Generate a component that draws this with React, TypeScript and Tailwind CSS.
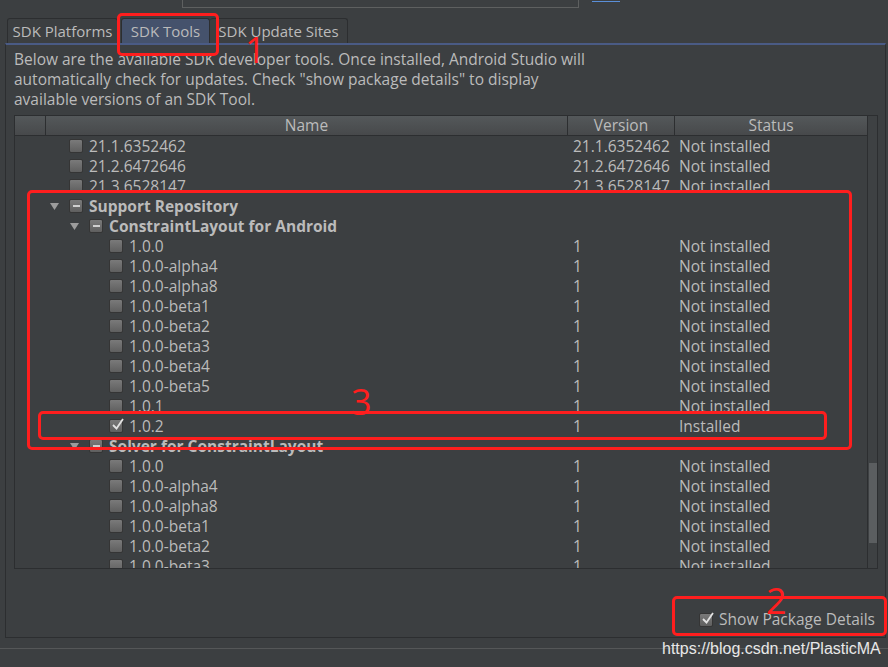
import { Fragment } from 'react'

type Row = {
  label: string
  version: string
  status: string
  level: 0 | 1 | 2
  expander?: boolean
  box: 'empty' | 'checked' | 'partial'
  bold?: boolean
}

const leaf = (label: string, level: 0 | 1 | 2, version: string, status = 'Not installed'): Row => ({
  label,
  version,
  status,
  level,
  box: 'empty',
})

const rows: Row[] = [
  leaf('21.1.6352462', 0, '21.1.6352462'),
  leaf('21.2.6472646', 0, '21.2.6472646'),
  leaf('21.3.6528147', 0, '21.3.6528147'),
  { label: 'Support Repository', version: '', status: '', level: 0, expander: true, box: 'partial', bold: true },
  { label: 'ConstraintLayout for Android', version: '', status: '', level: 1, expander: true, box: 'partial', bold: true },
  leaf('1.0.0', 2, '1'),
  leaf('1.0.0-alpha4', 2, '1'),
  leaf('1.0.0-alpha8', 2, '1'),
  leaf('1.0.0-beta1', 2, '1'),
  leaf('1.0.0-beta2', 2, '1'),
  leaf('1.0.0-beta3', 2, '1'),
  leaf('1.0.0-beta4', 2, '1'),
  leaf('1.0.0-beta5', 2, '1'),
  leaf('1.0.1', 2, '1'),
  { label: '1.0.2', version: '1', status: 'Installed', level: 2, box: 'checked' },
  { label: 'Solver for ConstraintLayout', version: '', status: '', level: 1, expander: true, box: 'partial', bold: true },
  leaf('1.0.0', 2, '1'),
  leaf('1.0.0-alpha4', 2, '1'),
  leaf('1.0.0-alpha8', 2, '1'),
  leaf('1.0.0-beta1', 2, '1'),
  leaf('1.0.0-beta2', 2, '1'),
  leaf('1.0.0-beta3', 2, '1'),
]

const indent = {
  0: 'pl-[33px]',
  1: 'pl-[53px]',
  2: 'pl-[73px]',
}

function Box({ state }: { state: 'empty' | 'checked' | 'partial' }) {
  return (
    <span className="relative flex h-[14px] w-[14px] shrink-0 items-center justify-center rounded-[2px] border border-[#353535] bg-gradient-to-b from-[#7a7a7a] to-[#5f5f5f]">
      {state === 'partial' && <span className="h-[2px] w-[7px] bg-[#cfcfcf]" />}
      {state === 'checked' && (
        <svg width="14" height="14" viewBox="0 0 14 14" className="absolute -top-[3px] left-[1px]">
          <path d="M2 8 L5.5 11.5 L12 2" fill="none" stroke="#e2e2e2" strokeWidth="1.8" />
        </svg>
      )}
    </span>
  )
}

function Triangle() {
  return (
    <svg width="9" height="7" viewBox="0 0 9 7" className="ml-[2px]">
      <polygon points="0,0 9,0 4.5,7" fill="#9c9c9c" />
    </svg>
  )
}

function RedBox({ className }: { className: string }) {
  return <div className={`absolute rounded-[5px] border-[3px] border-[#ff1e1e] ${className}`} />
}

export default function App() {
  return (
    <div className="relative h-[667px] w-[888px] overflow-hidden bg-[#3c3f41] font-['Open_Sans',sans-serif] text-[15.5px] text-[#bbbbbb]">
      {/* search field remnant at top */}
      <div className="flex h-[18px] items-start">
        <div className="ml-[182px] h-[8px] w-[397px] border-b border-l border-r border-[#5e6060]" />
        <div className="ml-[13px] mt-[1px] h-[1px] w-[28px] bg-[#5a8fd8]" />
      </div>

      {/* tabs */}
      <div className="flex h-[25px] items-end pl-[7px] text-[15px]">
        <div className="flex h-[25px] w-[111px] items-center justify-center rounded-t-[3px] border-l border-r border-t border-[#2c2e30]">
          SDK Platforms
        </div>
        <div className="ml-[3px] flex h-[25px] w-[89px] items-center justify-center rounded-t-[3px] border-l border-r border-t border-[#2c2e30] bg-[#45526c]">
          SDK Tools
        </div>
        <div className="flex h-[25px] w-[138px] items-center justify-center rounded-t-[3px] border-r border-t border-[#2c2e30]">
          SDK Update Sites
        </div>
      </div>

      {/* panel */}
      <div className="ml-[5px] flex h-[595px] w-[881px] flex-col border-b border-l border-r border-t-2 border-b-[#2c2e30] border-l-[#2c2e30] border-r-[#2c2e30] border-t-[#4a5b85]">
        <p className="pl-[8px] pt-[4px] leading-[20px]">
          Below are the available SDK developer tools. Once installed, Android Studio will
          <br />
          automatically check for updates. Check "show package details" to display
          <br />
          available versions of an SDK Tool.
        </p>

        <div className="ml-[8px] mt-[6px] flex h-[454px] w-[864px] border border-[#2c2e30]">
          <div className="flex w-[852px] flex-col">
            {/* header */}
            <div className="flex h-[20px] shrink-0 border-b border-[#2c2e30] bg-gradient-to-b from-[#54585a] to-[#47494b] leading-[19px]">
              <div className="w-[31px] border-r border-[#2c2e30]" />
              <div className="w-[522px] border-r border-[#2c2e30] text-center">Name</div>
              <div className="w-[107px] border-r border-[#2c2e30] text-center">Version</div>
              <div className="flex-1 text-center">Status</div>
            </div>
            {/* rows */}
            <div className="flex-1 overflow-hidden">
              {rows.map((r, i) => (
                <Fragment key={i}>
                  <div className="flex h-[20px] items-center leading-[20px]">
                    <div className={`flex w-[553px] items-center ${indent[r.level]}`}>
                      <span className="flex w-[21px] shrink-0 items-center">{r.expander && <Triangle />}</span>
                      <Box state={r.box} />
                      <span className={`ml-[6px] whitespace-nowrap ${r.bold ? 'font-bold' : ''}`}>{r.label}</span>
                    </div>
                    <div className="w-[107px] pl-[5px] whitespace-nowrap">{r.version}</div>
                    <div className="flex-1 pl-[4px] whitespace-nowrap">{r.status}</div>
                  </div>
                </Fragment>
              ))}
            </div>
          </div>
          {/* scrollbar */}
          <div className="flex w-[10px] flex-col border-l border-[#2c2e30] bg-[#3e4143] pt-[347px]">
            <div className="ml-[1px] h-[80px] w-[8px] bg-[#5b5e60]" />
          </div>
        </div>

        <div className="mt-auto flex h-[34px] items-center justify-end pr-[10px]">
          <Box state="checked" />
          <span className="ml-[6px]">Show Package Details</span>
        </div>
      </div>

      <div className="mt-[10px] h-[1px] w-full bg-[#555758]" />

      {/* annotations */}
      <RedBox className="left-[117px] top-[13px] h-[43px] w-[102px]" />
      <div className="absolute left-[245px] top-[32px] text-[36px] leading-none text-[#ff1e1e]">1</div>
      <RedBox className="left-[27px] top-[190px] h-[260px] w-[825px]" />
      <RedBox className="left-[38px] top-[411px] h-[29px] w-[789px]" />
      <div className="absolute left-[351px] top-[384px] text-[36px] leading-none text-[#ff1e1e]">3</div>
      <RedBox className="left-[672px] top-[596px] h-[40px] w-[215px]" />
      <div className="absolute left-[766px] top-[583px] text-[36px] leading-none text-[#ff1e1e]">2</div>
      <div className="absolute left-[662px] top-[637px] font-['Liberation_Sans',sans-serif] text-[16px] text-[#e8e8e8]">
        https://blog.csdn.net/PlasticMA
      </div>
    </div>
  )
}
